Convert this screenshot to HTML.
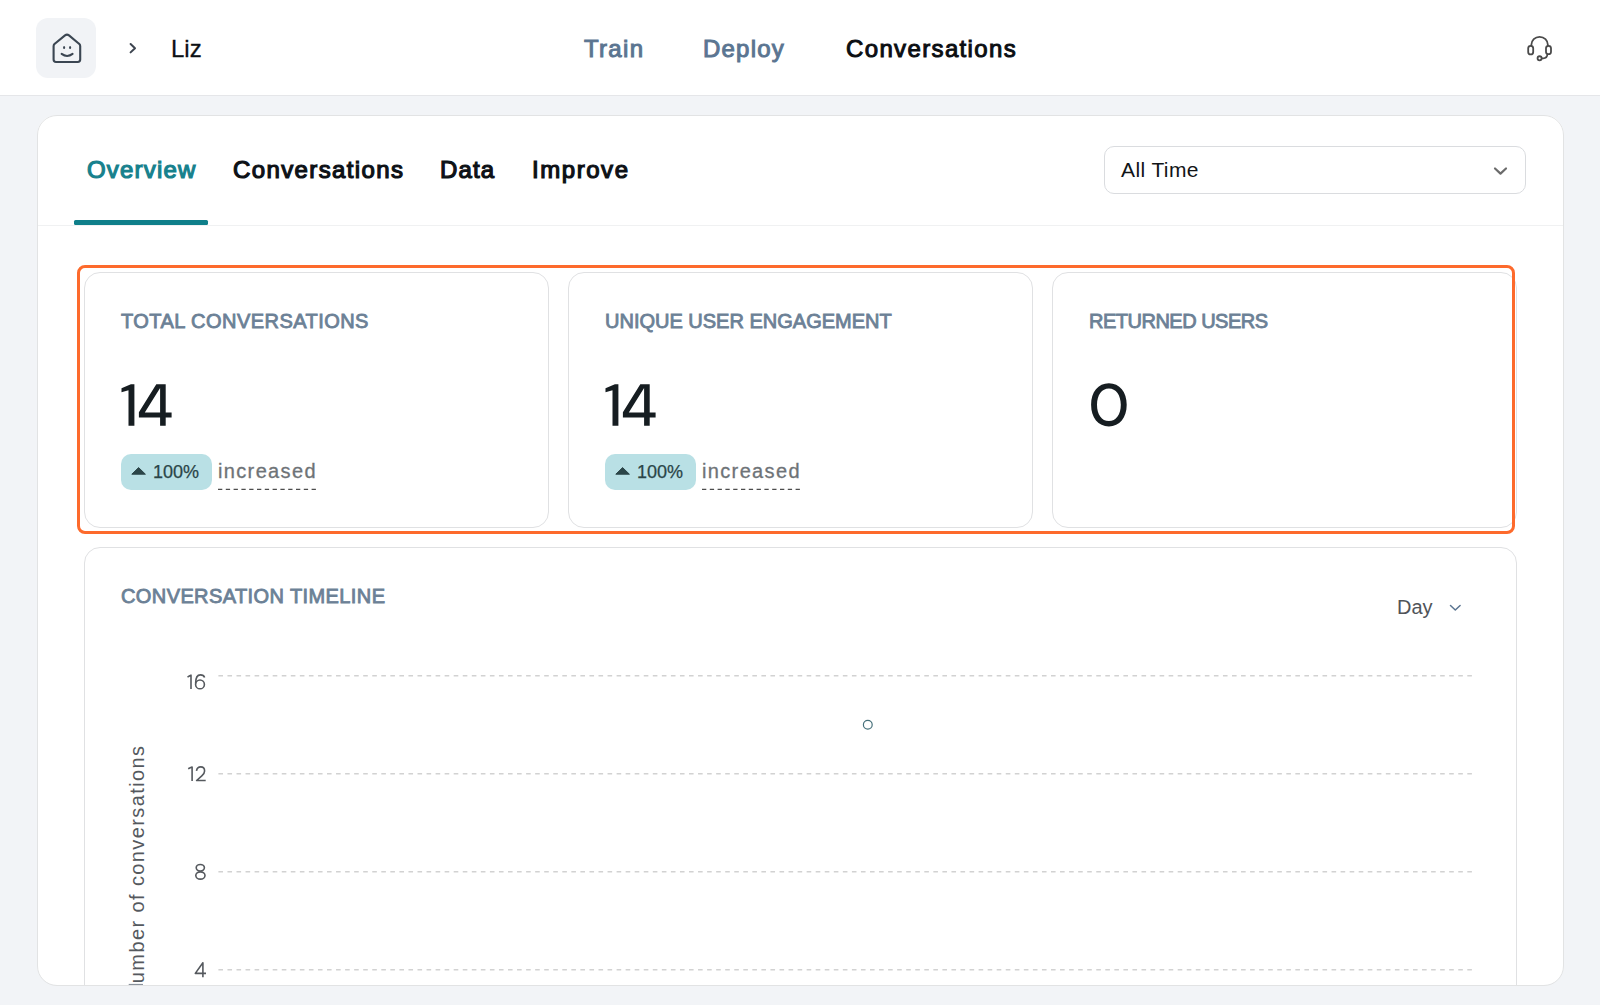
<!DOCTYPE html>
<html>
<head>
<meta charset="utf-8">
<style>
*{box-sizing:border-box;margin:0;padding:0}
html,body{width:1600px;height:1005px;overflow:hidden}
body{background:#f2f4f7;font-family:"Liberation Sans",sans-serif;position:relative}
.abs{position:absolute}
.t{position:absolute;white-space:nowrap;line-height:1}
#header{left:0;top:0;width:1600px;height:96px;background:#fff;border-bottom:1px solid #e5e6e9}
#logo{left:36px;top:18px;width:60px;height:60px;border-radius:12px;background:#f1f3f6}
.nav{font-weight:normal;font-size:24px;color:#5b7591;letter-spacing:0.3px;-webkit-text-stroke:1.0px #5b7591}
#clip{left:0;top:0;width:1600px;height:985px;overflow:hidden}
#card{left:37px;top:115px;width:1527px;height:870px;background:#fff;border-radius:20px}
#cardborder{left:37px;top:115px;width:1527px;height:870.6px;border:1px solid #e2e3e4;border-radius:20px;pointer-events:none}
.tab{font-weight:normal;font-size:24px;color:#0d1116;letter-spacing:0.3px;-webkit-text-stroke:1.2px #0d1116}
#sep{left:37px;top:225px;width:1527px;height:1px;background:#f0f1f2}
#uline{left:73.7px;top:220px;width:134.3px;height:5px;border-radius:1.5px;background:#0f7f8a}
#dd{left:1104px;top:146px;width:422px;height:48px;border:1.5px solid #dadcdf;border-radius:10px;background:#fff}
.stat{top:272px;width:465.5px;height:256px;border:1.5px solid #e0e1e3;border-radius:16px;background:#fff}
.lbl{font-weight:normal;font-size:20px;color:#6c8196;letter-spacing:0.2px;-webkit-text-stroke:0.85px #6c8196}
.badge{top:454px;width:91px;height:36px;border-radius:10px;background:#b9e0e5}
.pct{font-size:18px;color:#2a4548;-webkit-text-stroke:0.25px #2a4548}
.inc{font-size:20px;color:#6e7377;letter-spacing:1.35px;-webkit-text-stroke:0.3px #6e7377}
#orange{left:77px;top:265px;width:1438px;height:269px;border:3px solid #fd6a2c;border-radius:8px}
#chart{left:83.5px;top:546.5px;width:1433.5px;height:500px;border:1.5px solid #e0e1e3;border-radius:16px;background:#fff}
.ylab{font-size:20px;color:#4a4f55;letter-spacing:-1px}
</style>
</head>
<body>
<div id="header" class="abs"></div>
<div id="logo" class="abs"></div>
<div class="t" style="left:171px;top:37px;font-size:24px;color:#0d1014;-webkit-text-stroke:0.3px #0d1014">Liz</div>
<div class="t nav" style="left:584px;top:37px;letter-spacing:1.3px">Train</div>
<div class="t nav" style="left:703px;top:37px;letter-spacing:1.22px">Deploy</div>
<div class="t nav" style="left:846px;top:37px;color:#0b0e12;-webkit-text-stroke-color:#0b0e12;letter-spacing:1.36px">Conversations</div>

<div id="clip" class="abs">
  <div id="card" class="abs"></div>
  <div id="sep" class="abs"></div>
  <div class="t tab" style="left:87px;top:158px;color:#17818d;-webkit-text-stroke-color:#17818d;letter-spacing:1.19px">Overview</div>
  <div class="t tab" style="left:233px;top:158px;letter-spacing:1.38px">Conversations</div>
  <div class="t tab" style="left:440px;top:158px;letter-spacing:1.1px">Data</div>
  <div class="t tab" style="left:532px;top:158px;letter-spacing:1.55px">Improve</div>
  <div id="uline" class="abs"></div>

  <div id="dd" class="abs"></div>
  <div class="t" style="left:1121px;top:159px;font-size:21px;color:#111417;letter-spacing:0.4px">All Time</div>

  <div class="stat abs" style="left:83.5px"></div>
  <div class="stat abs" style="left:567.5px"></div>
  <div class="stat abs" style="left:1051.5px"></div>

  <div class="t lbl" style="left:121px;top:311px;letter-spacing:0.45px">TOTAL CONVERSATIONS</div>
  <div class="t lbl" style="left:605px;top:311px;letter-spacing:0px">UNIQUE USER ENGAGEMENT</div>
  <div class="t lbl" style="left:1089px;top:311px;letter-spacing:-0.5px">RETURNED USERS</div>

  <div class="badge abs" style="left:121px"></div>
  <div class="t pct" style="left:153px;top:463px">100%</div>
  <div class="t inc" style="left:218px;top:461px">increased</div>

  <div class="badge abs" style="left:605px"></div>
  <div class="t pct" style="left:637px;top:463px">100%</div>
  <div class="t inc" style="left:702px;top:461px">increased</div>

  <div id="orange" class="abs"></div>

  <div id="chart" class="abs"></div>
  <div class="t lbl" style="left:121px;top:586px;letter-spacing:0.4px">CONVERSATION TIMELINE</div>
  <div class="t" style="left:1397px;top:597px;font-size:20px;color:#505459">Day</div>

  <div class="t" style="left:127px;top:999px;font-size:20px;color:#55595e;letter-spacing:1.4px;transform-origin:0 0;transform:rotate(-90deg)">Number of conversations</div>

  <svg class="abs" style="left:0;top:0" width="1600" height="1005" viewBox="0 0 1600 1005">
    <!-- grid lines -->
    <g stroke="#d2d2d2" stroke-width="1.4" stroke-dasharray="4.6 4.45" fill="none">
      <path d="M218.4 675.8 H1472.5"/>
      <path d="M218.4 773.8 H1472.5"/>
      <path d="M218.4 871.8 H1472.5"/>
      <path d="M218.4 969.7 H1472.5"/>
    </g>
    <!-- y axis digits -->
    <g fill="none" stroke="#55595e" stroke-width="1.6" stroke-linejoin="round">
      <path d="M187.5 677.1 Q189.4 675.9 191 675.2 V689.1"/>
      <path d="M204.6 677.4 C204 675.6 202.4 674.9 200.4 674.9 C197 674.9 195.6 678.2 195.6 683.5"/>
      <circle cx="200" cy="684.4" r="4.4"/>
      <path d="M188.2 768.8 Q190.4 767.7 192.1 767.1 V781.1"/>
      <path d="M196.5 770.8 C197 768 198.8 766.9 200.7 766.9 C203 766.9 204.6 768.6 204.6 771 C204.6 773 203.5 774.4 201.8 775.9 L196.6 780.5 H205.7"/>
      <ellipse cx="200.3" cy="867.7" rx="4.1" ry="3.25"/>
      <ellipse cx="200.4" cy="875.5" rx="4.6" ry="3.65"/>
      <path d="M202.9 977.2 V962.8 L195.3 973.4 H206"/>
    </g>
    <rect x="128.7" y="983.9" width="14.3" height="1.1" fill="#8a929c"/>
    <!-- data point -->
    <circle cx="867.8" cy="724.8" r="4.4" fill="#fff" stroke="#46707a" stroke-width="1.2"/>
    <!-- increased underline -->
    <g stroke="#4d4d4d" stroke-width="1.1" stroke-dasharray="4.3 3.5" fill="none">
      <path d="M218 489.4 H316"/>
      <path d="M702 489.4 H800"/>
    </g>
    <!-- badge triangles -->
    <path d="M131.8 474.2 L138.6 467.6 L145.4 474.2 Z" fill="#2b4548" stroke="#2b4548" stroke-width="1" stroke-linejoin="round"/>
    <path d="M615.8 474.2 L622.6 467.6 L629.4 474.2 Z" fill="#2b4548" stroke="#2b4548" stroke-width="1" stroke-linejoin="round"/>
    <!-- big numbers 14 -->
    <g fill="#161d21">
      <path d="M134.4 384.3 L134.4 425.7 L128.5 425.7 L128.5 390.3 L121.5 392.2 L121.5 388.2 L130.9 384.3 Z"/>
      <path fill-rule="evenodd" d="M156.3 384.3 L165.7 384.3 L165.7 412.5 L171.6 412.5 L171.6 417.4 L165.7 417.4 L165.7 425.7 L160.1 425.7 L160.1 417.4 L138.9 417.4 L138.9 412.3 Z M160.1 387.9 L160.1 412.5 L144.8 412.5 Z"/>
      <g transform="translate(484 0)">
        <path d="M134.4 384.3 L134.4 425.7 L128.5 425.7 L128.5 390.3 L121.5 392.2 L121.5 388.2 L130.9 384.3 Z"/>
        <path fill-rule="evenodd" d="M156.3 384.3 L165.7 384.3 L165.7 412.5 L171.6 412.5 L171.6 417.4 L165.7 417.4 L165.7 425.7 L160.1 425.7 L160.1 417.4 L138.9 417.4 L138.9 412.3 Z M160.1 387.9 L160.1 412.5 L144.8 412.5 Z"/>
      </g>
    </g>
    <path fill="#161d21" fill-rule="evenodd" d="M1108.90 383.20 C1119.58 383.20 1126.70 391.84 1126.70 404.80 C1126.70 417.76 1119.58 426.40 1108.90 426.40 C1098.22 426.40 1091.10 417.76 1091.10 404.80 C1091.10 391.84 1098.22 383.20 1108.90 383.20 Z M1108.90 388.50 C1116.04 388.50 1120.80 395.02 1120.80 404.80 C1120.80 414.58 1116.04 421.10 1108.90 421.10 C1101.76 421.10 1097.00 414.58 1097.00 404.80 C1097.00 395.02 1101.76 388.50 1108.90 388.50 Z"/>
    <!-- dropdown chevron -->
    <path d="M1495 168.5 L1500.5 173.6 L1506 168.5" fill="none" stroke="#6b6b6b" stroke-width="2.2" stroke-linecap="round" stroke-linejoin="round"/>
    <!-- day chevron -->
    <path d="M1450.5 605.5 L1455.3 610 L1460.1 605.5" fill="none" stroke="#5b7591" stroke-width="1.5" stroke-linecap="round" stroke-linejoin="round"/>
  </svg>
</div>
<div id="cardborder" class="abs"></div>

<svg class="abs" style="left:0;top:0" width="1600" height="100" viewBox="0 0 1600 100">
  <!-- house -->
  <path d="M53.6 46 Q53.6 44.6 54.8 43.7 L65 35.4 Q67 33.9 69 35.4 L79 43.7 Q80.2 44.6 80.2 46 L80.2 59.6 Q80.2 62 77.8 62 L56 62 Q53.6 62 53.6 59.6 Z" fill="none" stroke="#3b4652" stroke-width="2.1" stroke-linejoin="round"/>
  <ellipse cx="64.1" cy="47.5" rx="1.05" ry="1.6" fill="#3b4652"/>
  <ellipse cx="70.1" cy="47.5" rx="1.05" ry="1.6" fill="#3b4652"/>
  <path d="M61.6 53.9 Q67.1 58 72.6 53.9" fill="none" stroke="#3b4652" stroke-width="2" stroke-linecap="round"/>
  <!-- breadcrumb chevron -->
  <path d="M130.6 44 L135 48.2 L130.6 52.4" fill="none" stroke="#3d4550" stroke-width="2" stroke-linecap="round" stroke-linejoin="round"/>
  <!-- headset -->
  <g fill="none" stroke="#4a4a4a" stroke-width="1.8">
    <path d="M1531.3 46.2 V45.1 A8.3 8.3 0 0 1 1547.9 45.1 V46.2"/>
    <rect x="1528.2" y="45.8" width="5" height="8.6" rx="2.5"/>
    <rect x="1546" y="45.8" width="5" height="8.4" rx="2.5"/>
    <path d="M1547.4 54.3 Q1547.2 58.3 1543.2 58.3 L1541.6 58.3"/>
    <circle cx="1539.6" cy="58.3" r="2.05"/>
  </g>
</svg>
</body>
</html>
